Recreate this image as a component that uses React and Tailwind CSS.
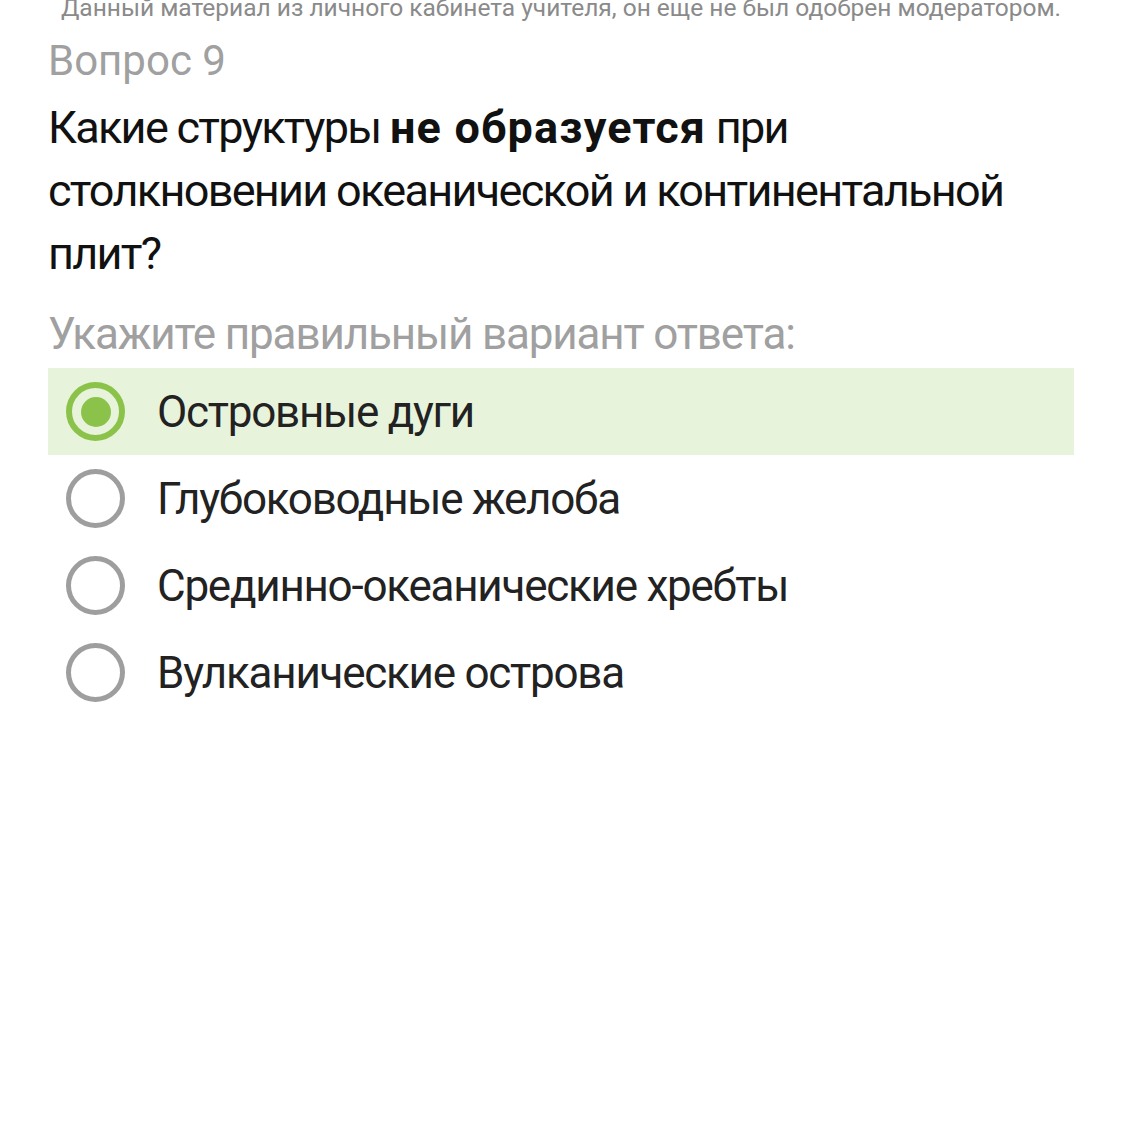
const options = [
  { label: 'Островные дуги', selected: true },
  { label: 'Глубоководные желоба', selected: false },
  { label: 'Срединно-океанические хребты', selected: false },
  { label: 'Вулканические острова', selected: false },
];

const Radio = ({ selected }) => {
  if (selected) {
    return (
      <div className="w-[59px] h-[59px] rounded-full border-[6px] border-[#8bc34a] flex items-center justify-center shrink-0">
        <div className="w-[30px] h-[30px] rounded-full bg-[#8bc34a]"></div>
      </div>
    );
  }
  return <div className="w-[59px] h-[59px] rounded-full border-[5px] border-[#9e9e9e] shrink-0"></div>;
};

export default function App() {
  return (
    <div className="min-h-screen bg-white font-['Roboto','Noto_Sans',sans-serif] overflow-hidden">
      {/* moderation note, cut off at the top */}
      <p className="-mt-[4px] text-center text-[24.5px] leading-[24px] text-[#8a8a8a] whitespace-nowrap">
        Данный материал из личного кабинета учителя, он еще не был одобрен модератором.
      </p>

      <div className="px-12">
        <h2 className="mt-[13px] text-[42px] leading-[56px] text-[#a0a0a0]">Вопрос 9</h2>

        <p className="mt-[7px] text-[45px] leading-[63px] tracking-[-1.7px] text-[#111111]">
          Какие структуры <b className="font-bold tracking-[1.2px]">не образуется</b> при
          <br />
          столкновении океанической и континентальной
          <br />
          плит?
        </p>

        <p className="mt-[21px] text-[44px] leading-[56px] tracking-[-1.15px] text-[#a0a0a0]">
          Укажите правильный вариант ответа:
        </p>

        <div className="mt-[6px] w-[1026px]">
          {options.map((opt) => (
            <div
              key={opt.label}
              className={`h-[87px] flex items-center pl-[18px] gap-[32px] ${opt.selected ? 'bg-[#e8f3dc]' : ''}`}
            >
              <Radio selected={opt.selected} />
              <span className="text-[44px] leading-[52px] tracking-[-1.25px] text-[#222222]">{opt.label}</span>
            </div>
          ))}
        </div>
      </div>
    </div>
  );
}
